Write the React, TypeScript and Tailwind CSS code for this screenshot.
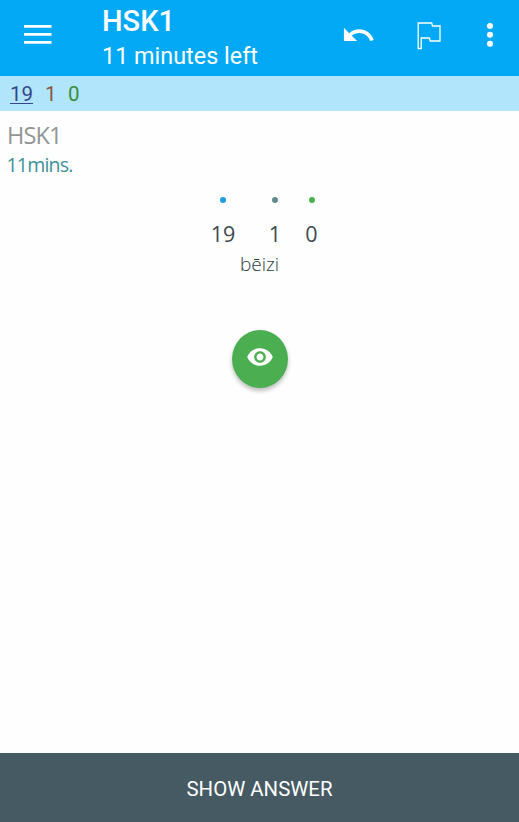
import React from "react";

const counts = [
  { value: "19", dot: "bg-[#209fe0]", col: "w-[50px]" },
  { value: "1", dot: "bg-[#5f8a90]", col: "w-[54px]" },
  { value: "0", dot: "bg-[#4bae50]", col: "w-[19px]" },
];

function Header() {
  return (
    <header className="flex h-[76px] shrink-0 bg-[#03a9f4] text-white">
      <svg className="ml-6 mt-[25px] h-5 w-7" viewBox="0 0 28 20" fill="currentColor">
        <path d="M0 0h27.5v2.7H0zM0 8h27.5v2.7H0zM0 16h27.5v2.7H0z" />
      </svg>
      <div className="ml-[50px] w-[239px] whitespace-nowrap">
        <h1 className="mt-[3px] h-9 text-[29px] font-medium leading-9">HSK1</h1>
        <p className="mt-[2px] text-[23.4px] leading-[30px]">11 minutes left</p>
      </div>
      <svg className="mt-[18px] h-[35px] w-[35px] shrink-0" viewBox="0 0 24 24" fill="currentColor">
        <path d="M12.5 7.7c-2.65 0-5.05 1.1-6.9 2.7L2 6.6v9.2h9l-3.62-3.62c1.39-1.16 3.16-1.88 5.12-1.88 3.54 0 6.3 2.11 7.6 5.5l2.37-.78C21.08 10.8 17.15 7.7 12.5 7.7z" />
      </svg>
      <svg className="ml-10 mt-5 h-[30px] w-[26px] shrink-0" viewBox="0 0 26 30" fill="none" stroke="currentColor" strokeWidth="1.3">
        <path d="M2.2 3h13.5l.8 3h7.5v15h-9.8l-.8-3H5.2v10.5h-3z" />
      </svg>
      <svg className="ml-[44px] mt-5 h-[30px] w-2 shrink-0" viewBox="0 0 8 30" fill="currentColor">
        <circle cx="4" cy="6" r="3" />
        <circle cx="4" cy="14.8" r="3" />
        <circle cx="4" cy="23.7" r="3" />
      </svg>
    </header>
  );
}

export default function App() {
  return (
    <div className="flex h-[822px] w-[519px] flex-col overflow-hidden bg-[#fefefe] font-['Roboto',sans-serif]">
      <Header />
      <div className="flex h-[35px] shrink-0 bg-[#b1e5fb] pl-[10px] pt-px text-[20.5px] leading-[35px]">
        <span className="w-[35px] text-[#35478a]">
          <span className="inline-block h-[27px] border-b border-[#35478a]">19</span>
        </span>
        <span className="w-[23px] text-[#8b5548]">1</span>
        <span className="text-[#388e3c]">0</span>
      </div>
      <main className="flex flex-1 flex-col font-['Open_Sans',sans-serif]">
        <h2 className="ml-[7px] mt-[9px] h-[30px] text-[23.5px] leading-[30px] tracking-[-0.9px] text-[#919694]">HSK1</h2>
        <p className="ml-[6.5px] h-[30px] text-[19.5px] leading-[30px] tracking-[-0.8px] text-[#3f919b]">11mins.</p>
        <div className="ml-[198px] mt-[17px] flex">
          {counts.map((c) => (
            <div key={c.value} className={`flex flex-col items-center ${c.col}`}>
              <i className={`h-[6px] w-[6px] rounded-full ${c.dot}`} />
              <span className="mt-4 text-[21.5px] leading-[30px] text-[#3c4a50]">{c.value}</span>
            </div>
          ))}
        </div>
        <p className="text-center text-[19px] font-light leading-[30px] text-[#2c3a40]">bēizi</p>
        <button className="mx-auto mt-[51px] flex h-[58px] w-14 items-center justify-center rounded-[50%] bg-[#4bae50] pb-[5px] text-white shadow-[0_3px_4px_rgba(0,0,0,0.25)]">
          <svg className="h-7 w-7" viewBox="0 0 24 24" fill="currentColor">
            <path d="M12 4.5C7 4.5 2.73 7.61 1 12c1.73 4.39 6 7.5 11 7.5s9.27-3.11 11-7.5c-1.73-4.39-6-7.5-11-7.5zM12 17c-2.76 0-5-2.24-5-5s2.24-5 5-5 5 2.24 5 5-2.24 5-5 5zm0-8c-1.66 0-3 1.34-3 3s1.34 3 3 3 3-1.34 3-3-1.34-3-3-3z" />
          </svg>
        </button>
      </main>
      <button className="h-[69px] shrink-0 bg-[#455a62] pt-[3px] text-[20.4px] leading-[66px] text-white">SHOW ANSWER</button>
    </div>
  );
}
